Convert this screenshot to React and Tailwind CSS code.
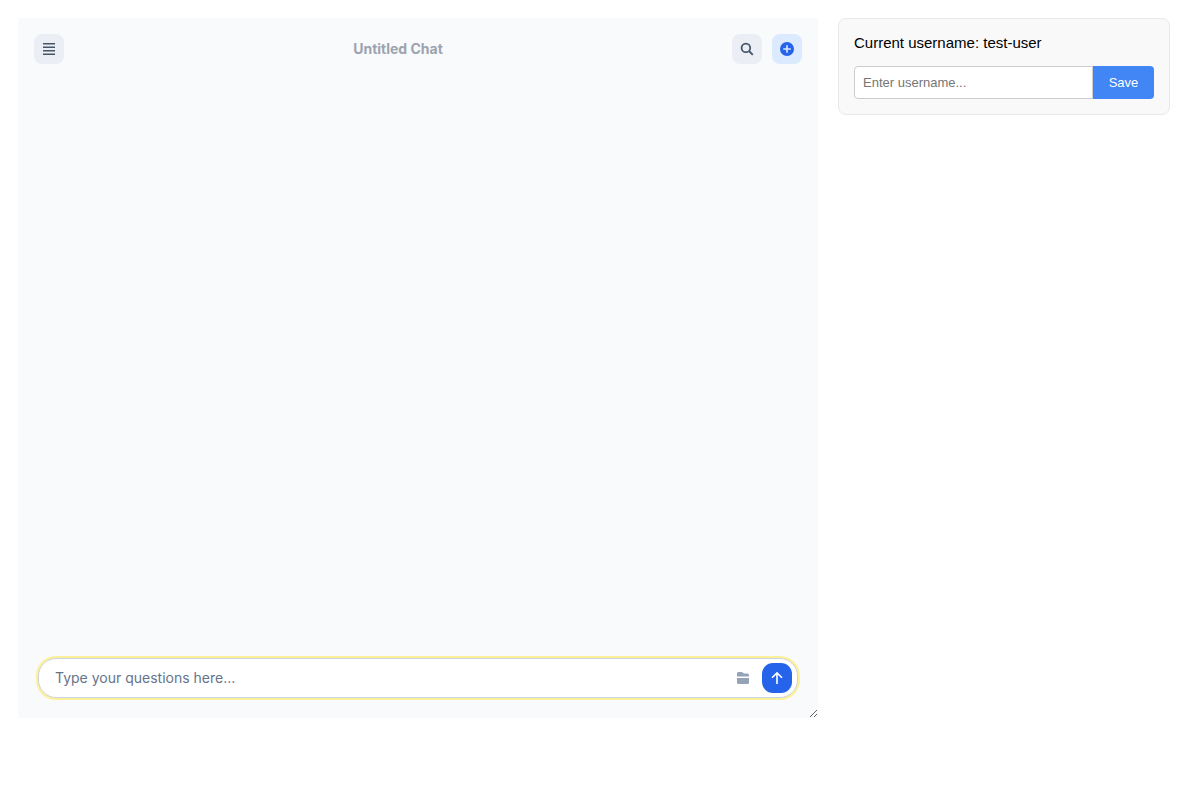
import { useState } from "react";

function MenuIcon() {
  return (
    <svg width="12" height="14" viewBox="0 0 12 14" stroke="currentColor" strokeWidth="1.5" aria-hidden="true">
      <path d="M0 1.8h12M0 5.2h12M0 8.8h12M0 12.2h12" />
    </svg>
  );
}

function SearchIcon() {
  return (
    <svg width="14" height="14" viewBox="0 0 14 14" fill="none" stroke="currentColor" strokeWidth="1.8" aria-hidden="true">
      <circle cx="5.9" cy="5.9" r="4.3" />
      <path d="M9 9L12.8 12.8" />
    </svg>
  );
}

function PlusCircleIcon() {
  return (
    <svg width="14" height="14" viewBox="0 0 14 14" aria-hidden="true">
      <circle cx="7" cy="7" r="7" fill="currentColor" />
      <path d="M7 3.2v7.6M3.2 7h7.6" stroke="#dbeafe" strokeWidth="1.6" />
    </svg>
  );
}

function FolderIcon() {
  return (
    <svg width="12" height="12" viewBox="0 0 12 12" fill="currentColor" aria-hidden="true">
      <path d="M0 4.6V1.5Q0 0 1.5 0H4.4Q5.2 0 5.8 .5L6.9 1.4H10.5Q12 1.4 12 2.9V4.6z" />
      <path d="M0 6h12v4.4q0 1.6-1.6 1.6H1.6Q0 12 0 10.4z" />
    </svg>
  );
}

function ArrowUpIcon() {
  return (
    <svg width="12" height="12" viewBox="0 0 12 12" fill="none" stroke="currentColor" strokeWidth="1.6" aria-hidden="true">
      <path d="M6 12V1M1 5.8L6 .9l5 4.9" />
    </svg>
  );
}

function IconButton({ label, className, children }) {
  return (
    <button
      type="button"
      aria-label={label}
      className={`flex size-[30px] shrink-0 items-center justify-center ${className}`}
    >
      {children}
    </button>
  );
}

function ChatPanel() {
  const [message, setMessage] = useState("");
  return (
    <section className="flex h-[calc(100vh-100px)] min-w-0 flex-1 resize flex-col justify-between overflow-hidden bg-[#f8fafc] font-[Inter,sans-serif]">
      <header className="flex items-center p-4">
        <IconButton label="Menu" className="rounded-lg bg-[#ebeef5] text-[#475569]">
          <MenuIcon />
        </IconButton>
        <h1 className="flex-1 text-center text-sm font-bold text-[#9ca3af]">Untitled Chat</h1>
        <div className="flex gap-2.5">
          <IconButton label="Search" className="rounded-lg bg-[#ebeef5] text-[#475569]">
            <SearchIcon />
          </IconButton>
          <IconButton label="New chat" className="rounded-lg bg-[#dbeafe] text-[#2563eb]">
            <PlusCircleIcon />
          </IconButton>
        </div>
      </header>
      <form
        onSubmit={(e) => e.preventDefault()}
        className="m-5 flex h-10 items-center rounded-[18px] border border-[#cbd5e1] bg-white pr-[5px] pl-4 ring-2 ring-[#fdf09a]"
      >
        <input
          type="text"
          aria-label="Message"
          placeholder="Type your questions here..."
          value={message}
          onChange={(e) => setMessage(e.target.value)}
          className="min-w-0 flex-1 text-sm text-slate-700 outline-none placeholder:text-[#64748b]"
        />
        <IconButton label="Attach files" className="mr-1 text-[#94a3b8]">
          <FolderIcon />
        </IconButton>
        <IconButton label="Send" className="rounded-[11px] bg-[#2563eb] text-white">
          <ArrowUpIcon />
        </IconButton>
      </form>
    </section>
  );
}

function UsernameCard() {
  const [draft, setDraft] = useState("");
  const [name, setName] = useState("test-user");
  const save = (e) => {
    e.preventDefault();
    if (draft.trim()) setName(draft.trim());
  };
  return (
    <aside className="w-[332px] shrink-0 rounded-lg border border-[#e8e8e8] bg-[#f9f9f9] p-[15px] font-['Liberation_Sans',Arial,sans-serif]">
      <p className="mb-3.5 text-[15px] leading-[18px] text-black">Current username: {name}</p>
      <form onSubmit={save} className="flex h-[33px]">
        <input
          type="text"
          aria-label="Username"
          placeholder="Enter username..."
          value={draft}
          onChange={(e) => setDraft(e.target.value)}
          className="min-w-0 flex-1 rounded-l border border-[#ccc] bg-white px-2 text-[13px] text-black outline-none placeholder:text-[#757575]"
        />
        <button type="submit" className="w-[61px] rounded-r bg-[#4285f4] text-[13px] text-white">
          Save
        </button>
      </form>
    </aside>
  );
}

export default function App() {
  return (
    <main className="flex min-h-screen items-start gap-5 bg-white py-[18px] pr-[30px] pl-[18px]">
      <ChatPanel />
      <UsernameCard />
    </main>
  );
}
